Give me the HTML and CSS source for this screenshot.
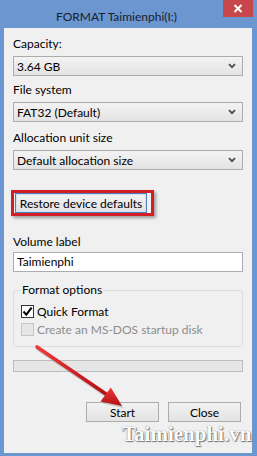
FILE: index.html
```html
<!DOCTYPE html>
<html>
<head>
<meta charset="utf-8">
<title>FORMAT Taimienphi(I:)</title>
<link rel="stylesheet" href="styles.css">
</head>
<body>
<div class="window">
  <div class="titlebar">
    <div class="title">FORMAT Taimienphi(I:)</div>
    <div class="close">
      <svg width="10" height="9" viewBox="0 0 10 9"><path d="M1.5 1 L8.5 8 M8.5 1 L1.5 8" stroke="#fff" stroke-width="2" fill="none"/></svg>
    </div>
  </div>
  <div class="client">
    <div class="field">
      <div class="label">Capacity:</div>
      <div class="select"><span>3.64 GB</span><svg class="chev" width="8" height="6" viewBox="0 0 8 6"><path d="M1 1.2 L4 4.2 L7 1.2" stroke="#4a4a4a" stroke-width="1.7" fill="none"/></svg></div>
    </div>
    <div class="field gap-fs">
      <div class="label">File system</div>
      <div class="select"><span>FAT32 (Default)</span><svg class="chev" width="8" height="6" viewBox="0 0 8 6"><path d="M1 1.2 L4 4.2 L7 1.2" stroke="#4a4a4a" stroke-width="1.7" fill="none"/></svg></div>
    </div>
    <div class="field gap-alloc">
      <div class="label">Allocation unit size</div>
      <div class="select"><span>Default allocation size</span><svg class="chev" width="8" height="6" viewBox="0 0 8 6"><path d="M1 1.2 L4 4.2 L7 1.2" stroke="#4a4a4a" stroke-width="1.7" fill="none"/></svg></div>
    </div>
    <div class="restore">
      <div class="btn btn-default">Restore device defaults</div>
    </div>
    <div class="field gap-vol">
      <div class="label">Volume label</div>
      <div class="input">Taimienphi</div>
    </div>
    <fieldset class="group">
      <legend>Format options</legend>
      <div class="check"><span class="box on"><svg width="11" height="11" viewBox="0 0 11 11"><path d="M1.5 5.5 L4.3 8.6 L9.6 1.6" stroke="#000" stroke-width="2" fill="none"/></svg></span>Quick Format</div>
      <div class="check off"><span class="box"></span>Create an MS-DOS startup disk</div>
    </fieldset>
    <div class="progress"></div>
    <div class="actions">
      <div class="btn btn-action">Start</div>
      <div class="btn btn-action">Close</div>
    </div>
  </div>
</div>
<svg class="arrow" width="257" height="456" viewBox="0 0 257 456">
  <defs>
    <linearGradient id="ag" x1="0" y1="0" x2="0" y2="1">
      <stop offset="0" stop-color="#ee3a3a"/>
      <stop offset="1" stop-color="#b50f12"/>
    </linearGradient>
  </defs>
  <g opacity="0.35" transform="translate(1.5,2)">
    <path d="M37 347 L106 394" stroke="#777" stroke-width="4" stroke-linecap="round"/>
    <path d="M122 406 L101 401.5 L110.5 388 Z" fill="#777"/>
  </g>
  <path d="M37 347 L106 394" stroke="url(#ag)" stroke-width="3.6" stroke-linecap="round"/>
  <path d="M122 406 L100.5 401.5 L110.8 387.5 Z" fill="url(#ag)"/>
</svg>
<div class="watermark">Taimienphi.vn</div>
</body>
</html>
```
FILE: styles.css
```css
body {
  margin: 0;
  width: 257px;
  height: 456px;
  background: #6b96d0;
  font-family: Lato, "Noto Sans", sans-serif;
  font-size: 12px;
  color: #000;
  position: relative;
  overflow: hidden;
}

.window {
  display: flex;
  flex-direction: column;
  height: 456px;
}

.titlebar {
  height: 28px;
  display: flex;
  flex-shrink: 0;
}

.title {
  flex: 1;
  text-align: center;
  padding: 9px 0 0 10px;
  line-height: 16px;
  color: #17202e;
  font-size: 12px;
}

.close {
  width: 30px;
  height: 17px;
  margin-right: 4px;
  background: #c7474a;
  display: flex;
  align-items: center;
  justify-content: center;
}

.client {
  flex: 1;
  margin: 0 5px 3px 4px;
  background: #f0f0f0;
  padding: 8px 9px 0;
}

.label {
  line-height: 16px;
}

.select {
  margin-top: 4px;
  height: 20px;
  box-sizing: border-box;
  border: 1px solid #acacac;
  background: linear-gradient(#f3f3f3, #e3e3e3);
  display: flex;
  align-items: center;
  justify-content: space-between;
  padding: 0 6px 0 3px;
}

.chev {
  display: block;
}

.gap-fs {
  margin-top: 6px;
}

.gap-alloc {
  margin-top: 8px;
}

.gap-vol {
  margin-top: 18px;
}

.btn {
  height: 20px;
  box-sizing: border-box;
  border: 1px solid #acacac;
  background: linear-gradient(#f2f2f2, #e3e3e3);
  display: flex;
  align-items: center;
  justify-content: center;
}

.restore {
  width: fit-content;
  margin: 20px 0 0 -2px;
  border: 3px solid #d41e26;
  padding: 0 4px 0 1px;
  box-shadow: 2px 2px 3px rgba(0, 0, 0, 0.35);
}

.btn-default {
  width: 132px;
  border-color: #4f7fb8;
  box-shadow: inset 0 0 0 1px #cfe0f3;
}

.input {
  margin-top: 2px;
  height: 20px;
  box-sizing: border-box;
  border: 1px solid #abadb3;
  background: #fff;
  padding-left: 3px;
  line-height: 18px;
}

.group {
  margin: 10px 0 0;
  border: 1px solid #dcdcdc;
  border-radius: 3px;
  padding: 5px 0 9px 6px;
}

.group legend {
  padding: 0 2px;
  line-height: 16px;
}

.check {
  display: flex;
  align-items: center;
  height: 16px;
  margin-left: 1px;
}

.check + .check {
  margin-top: 2px;
}

.box {
  width: 13px;
  height: 13px;
  box-sizing: border-box;
  border: 1px solid #333;
  background: #fff;
  margin-right: 3px;
  display: flex;
  align-items: center;
  justify-content: center;
}

.off {
  color: #8d8d8d;
}

.off .box {
  border-color: #c4c4c4;
  background: #e6e6e6;
}

.progress {
  margin-top: 13px;
  height: 12px;
  box-sizing: border-box;
  border: 1px solid #bcbcbc;
  background: #e6e6e6;
}

.actions {
  display: flex;
  justify-content: flex-end;
  gap: 9px;
  margin-top: 30px;
  padding-right: 2px;
}

.btn-action {
  width: 73px;
}

.arrow {
  position: absolute;
  left: 0;
  top: 0;
  pointer-events: none;
}

.watermark {
  position: absolute;
  left: 122px;
  top: 421px;
  font-family: "Liberation Serif", serif;
  font-weight: bold;
  font-size: 21px;
  line-height: 26px;
  color: #fff;
  white-space: nowrap;
  text-shadow: 0 0 1px #555, 1px 1px 1px #777;
}
```
